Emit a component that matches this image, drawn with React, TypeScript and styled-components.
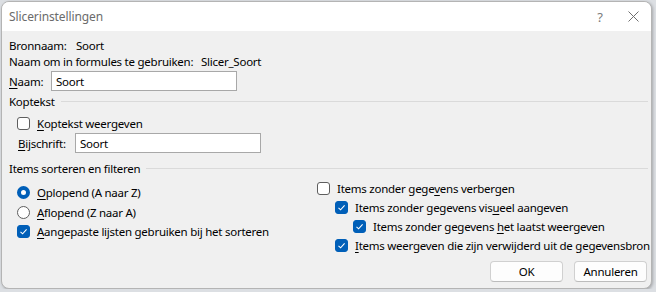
import React, { FC } from "react";
import styled, { createGlobalStyle } from "styled-components";

const GlobalStyle = createGlobalStyle`
  html, body {
    margin: 0;
    padding: 0;
    background: #dcdfe3;
  }
  body {
    font-family: "Noto Sans", "Open Sans", sans-serif;
    font-size: 11.5px;
    letter-spacing: -0.25px;
    color: #000;
  }
`;

const Dialog = styled.div`
  margin: 1px 0 0 1px;
  width: 651px;
  height: 288px;
  box-sizing: border-box;
  display: flex;
  flex-direction: column;
  background: #f0f0f0;
  border: 1px solid #b4b4b4;
  border-radius: 8px;
  overflow: hidden;
  box-shadow: 1px 1px 3px rgba(0, 0, 0, 0.25);
`;

const TitleBar = styled.div`
  height: 29px;
  display: flex;
  align-items: center;
  background: #fff;
  padding-left: 7px;
  color: #6b6b6b;
  font-size: 12px;
  letter-spacing: -0.1px;
`;

const Title = styled.div`
  flex: 1;
`;

const Caption = styled.div<{ $width: number }>`
  width: ${p => p.$width}px;
  height: 29px;
  display: flex;
  align-items: center;
  justify-content: center;
  color: #7a7a7a;
  font-size: 13px;
`;

const Body = styled.div`
  flex: 1;
  display: flex;
  flex-direction: column;
  padding: 6px 3px 6px 7px;
`;

const Row = styled.div<{ $height: number; $top?: number; $indent?: number }>`
  display: flex;
  align-items: center;
  height: ${p => p.$height}px;
  margin-top: ${p => p.$top || 0}px;
  padding-left: ${p => p.$indent || 0}px;
  white-space: nowrap;
`;

const Label = styled.span<{ $width: number }>`
  width: ${p => p.$width}px;
  flex: none;
`;

const TextBox = styled.div<{ $width: number }>`
  width: ${p => p.$width}px;
  height: 20px;
  box-sizing: border-box;
  border: 1px solid #a8a8a8;
  background: #fff;
  display: flex;
  align-items: center;
  padding-left: 4px;
`;

const Heading = styled.div<{ $top: number }>`
  display: flex;
  align-items: center;
  height: 16px;
  margin-top: ${p => p.$top}px;
  white-space: nowrap;
  &::after {
    content: "";
    flex: 1;
    height: 1px;
    margin-left: 6px;
    background: #dadada;
  }
`;

const Columns = styled.div`
  display: grid;
  grid-template-columns: 308px 1fr;
`;

const Column = styled.div<{ $top: number }>`
  display: flex;
  flex-direction: column;
  padding-top: ${p => p.$top}px;
`;

const Box = styled.span<{ $checked?: boolean }>`
  width: 13px;
  height: 13px;
  box-sizing: border-box;
  flex: none;
  border-radius: 3px;
  border: 1px solid ${p => (p.$checked ? "#005fb8" : "#5e5e5e")};
  background: ${p => (p.$checked ? "#005fb8" : "#fff")};
  display: flex;
  align-items: center;
  justify-content: center;
  margin-right: 7px;
`;

const Radio = styled.span<{ $checked?: boolean }>`
  width: 13px;
  height: 13px;
  box-sizing: border-box;
  flex: none;
  border-radius: 50%;
  border: ${p => (p.$checked ? "4px solid #005fb8" : "1px solid #5e5e5e")};
  background: #fff;
  margin-right: 7px;
`;

const Key = styled.span`
  text-decoration: underline;
  text-underline-offset: 2px;
`;

const Footer = styled.div`
  margin-top: auto;
  padding-right: 1px;
  display: flex;
  justify-content: flex-end;
  gap: 11px;
`;

const Button = styled.div`
  width: 73px;
  height: 21px;
  box-sizing: border-box;
  border: 1px solid #d0d0d0;
  border-bottom-color: #bcbcbc;
  border-radius: 4px;
  background: #fdfdfd;
  display: flex;
  align-items: center;
  justify-content: center;
`;

const Check: FC = () => (
  <svg width="9" height="9" viewBox="0 0 9 9">
    <path d="M1.5 4.8 L3.6 6.8 L7.6 2.4" fill="none" stroke="#fff" strokeWidth="1.1" />
  </svg>
);

type OptionProps = {
  checked?: boolean;
  radio?: boolean;
  indent?: number;
  height: number;
  children: React.ReactNode;
};

const Option: FC<OptionProps> = ({ checked, radio, indent, height, children }) => (
  <Row $height={height} $indent={indent}>
    {radio ? <Radio $checked={checked} /> : <Box $checked={checked}>{checked && <Check />}</Box>}
    <span>{children}</span>
  </Row>
);

const CloseIcon: FC = () => (
  <svg width="11" height="11" viewBox="0 0 11 11">
    <path d="M0.5 0.5 L10.5 10.5 M10.5 0.5 L0.5 10.5" stroke="#6f6f6f" strokeWidth="1" />
  </svg>
);

const App: FC = () => (
  <>
    <GlobalStyle />
    <Dialog>
      <TitleBar>
        <Title>Slicerinstellingen</Title>
        <Caption $width={30}>?</Caption>
        <Caption $width={36}>
          <CloseIcon />
        </Caption>
      </TitleBar>
      <Body>
        <Row $height={16}>
          <Label $width={67}>Bronnaam:</Label>
          <span>Soort</span>
        </Row>
        <Row $height={16}>
          <Label $width={192}>Naam om in formules te gebruiken:</Label>
          <span>Slicer_Soort</span>
        </Row>
        <Row $height={20} $top={2}>
          <Label $width={42}>
            <Key>N</Key>aam:
          </Label>
          <TextBox $width={186}>Soort</TextBox>
        </Row>
        <Heading $top={2}>Koptekst</Heading>
        <Row $height={16} $top={6} $indent={8}>
          <Box />
          <span>
            <Key>K</Key>optekst weergeven
          </span>
        </Row>
        <Row $height={20} $top={2} $indent={9}>
          <Label $width={57}>
            <Key>B</Key>ijschrift:
          </Label>
          <TextBox $width={186}>Soort</TextBox>
        </Row>
        <Heading $top={7}>Items sorteren en filteren</Heading>
        <Columns>
          <Column $top={6}>
            <Option radio checked indent={8} height={20}>
              <Key>O</Key>plopend (A naar Z)
            </Option>
            <Option radio indent={8} height={20}>
              <Key>A</Key>flopend (Z naar A)
            </Option>
            <Option checked indent={8} height={19}>
              <Key>A</Key>angepaste lijsten gebruiken bij het sorteren
            </Option>
          </Column>
          <Column $top={3}>
            <Option height={19}>
              Items zonder gege<Key>v</Key>ens verbergen
            </Option>
            <Option checked indent={18} height={19}>
              Items zonder gegevens vis<Key>u</Key>eel aangeven
            </Option>
            <Option checked indent={36} height={19}>
              Items zonder gegevens <Key>h</Key>et laatst weergeven
            </Option>
            <Option checked indent={18} height={18}>
              <Key>I</Key>tems weergeven die zijn verwijderd uit de gegevensbron
            </Option>
          </Column>
        </Columns>
        <Footer>
          <Button>OK</Button>
          <Button>Annuleren</Button>
        </Footer>
      </Body>
    </Dialog>
  </>
);

export default App;
